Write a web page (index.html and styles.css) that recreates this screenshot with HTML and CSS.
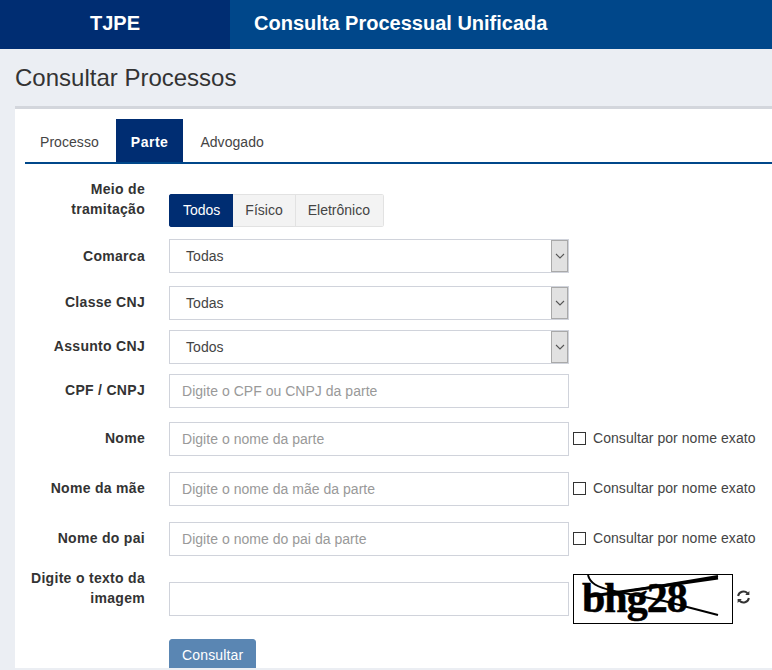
FILE: index.html
```html
<!DOCTYPE html>
<html lang="pt-BR">
<head>
    <meta charset="UTF-8">
    <meta name="viewport" content="width=device-width, initial-scale=1.0">
    <title>Consulta Processual Unificada</title>
    <link rel="stylesheet" href="styles.css">
</head>
<body>
    <header class="topbar">
        <div class="brand">TJPE</div>
        <div class="system">Consulta Processual Unificada</div>
    </header>

    <h1 class="page-title">Consultar Processos</h1>

    <main class="panel">
        <ul class="tabs">
            <li class="tab">Processo</li>
            <li class="tab active">Parte</li>
            <li class="tab">Advogado</li>
        </ul>

        <form class="search-form">
            <div class="row row-meio">
                <label class="row-label">Meio de tramitação</label>
                <div class="btn-group">
                    <span class="btn-seg on">Todos</span>
                    <span class="btn-seg">Físico</span>
                    <span class="btn-seg">Eletrônico</span>
                </div>
            </div>

            <div class="row row-comarca">
                <label class="row-label">Comarca</label>
                <div class="select-box">
                    <span class="select-value">Todas</span>
                    <span class="select-arrow"><svg width="10" height="6" viewBox="0 0 10 6"><path d="M1 1l4 4 4-4" fill="none" stroke="#555" stroke-width="1.1"/></svg></span>
                </div>
            </div>

            <div class="row row-classe">
                <label class="row-label">Classe CNJ</label>
                <div class="select-box">
                    <span class="select-value">Todas</span>
                    <span class="select-arrow"><svg width="10" height="6" viewBox="0 0 10 6"><path d="M1 1l4 4 4-4" fill="none" stroke="#555" stroke-width="1.1"/></svg></span>
                </div>
            </div>

            <div class="row row-assunto">
                <label class="row-label">Assunto CNJ</label>
                <div class="select-box">
                    <span class="select-value">Todos</span>
                    <span class="select-arrow"><svg width="10" height="6" viewBox="0 0 10 6"><path d="M1 1l4 4 4-4" fill="none" stroke="#555" stroke-width="1.1"/></svg></span>
                </div>
            </div>

            <div class="row row-cpf">
                <label class="row-label">CPF / CNPJ</label>
                <input class="text-input" type="text" placeholder="Digite o CPF ou CNPJ da parte">
            </div>

            <div class="row row-nome">
                <label class="row-label">Nome</label>
                <input class="text-input" type="text" placeholder="Digite o nome da parte">
                <label class="exact"><span class="check"></span>Consultar por nome exato</label>
            </div>

            <div class="row row-nome">
                <label class="row-label">Nome da mãe</label>
                <input class="text-input" type="text" placeholder="Digite o nome da mãe da parte">
                <label class="exact"><span class="check"></span>Consultar por nome exato</label>
            </div>

            <div class="row row-nome">
                <label class="row-label">Nome do pai</label>
                <input class="text-input" type="text" placeholder="Digite o nome do pai da parte">
                <label class="exact"><span class="check"></span>Consultar por nome exato</label>
            </div>

            <div class="row row-captcha">
                <label class="row-label">Digite o texto da imagem</label>
                <input class="text-input" type="text">
                <div class="captcha">
                    <span class="captcha-text">bhg28</span>
                    <svg class="captcha-lines" width="158" height="48" viewBox="0 0 158 48">
                        <path d="M36 19L144 1" stroke="#000" stroke-width="2" fill="none"/>
                        <path d="M11 22L144 3" stroke="#000" stroke-width="3" fill="none"/>
                        <path d="M14 0C16 8 22 12 40 16L90 26L144 40" stroke="#000" stroke-width="2" fill="none"/>
                    </svg>
                </div>
                <svg class="refresh" width="15" height="14" viewBox="0 0 14 14">
                    <path d="M1.6 6A5.5 5.5 0 0 1 11 3.2" fill="none" stroke="#333" stroke-width="2"/>
                    <path d="M12.9 .9v4.2H8.7z" fill="#333"/>
                    <path d="M12.4 8A5.5 5.5 0 0 1 3 10.8" fill="none" stroke="#333" stroke-width="2"/>
                    <path d="M1.1 13.1V8.9h4.2z" fill="#333"/>
                </svg>
            </div>

            <div class="row row-submit">
                <button class="submit-btn" type="button">Consultar</button>
            </div>
        </form>
    </main>
</body>
</html>
```

FILE: styles.css
```css
html {
    height: 100%;
}

body {
    margin: 0;
    height: 670px;
    overflow: hidden;
    background-color: #ebeef3;
    font-family: "Liberation Sans", Arial, sans-serif;
    font-size: 14px;
    letter-spacing: .06px;
    color: #333;
}

.topbar {
    display: flex;
    height: 49px;
    background-color: #00478a;
    color: #fff;
    font-weight: bold;
    font-size: 20px;
    line-height: 47px;
    letter-spacing: 0;
}

.brand {
    width: 230px;
    text-align: center;
    background-color: #002d72;
}

.system {
    padding-left: 24px;
}

.page-title {
    margin: 0;
    padding: 14px 0 0 15px;
    height: 43px;
    font-size: 24px;
    font-weight: normal;
    line-height: 30px;
    letter-spacing: 0;
    color: #333;
}

.panel {
    margin-left: 15px;
    height: 549px;
    overflow: hidden;
    border-top: 3px solid #d3d6dc;
    background-color: #fff;
    padding: 10px 0 0 10px;
}

.tabs {
    display: flex;
    margin: 0;
    padding: 0;
    list-style-type: none;
    border-bottom: 2px solid #00478a;
}

.tab {
    height: 43px;
    padding: 0 15px;
    margin-right: 2px;
    line-height: 46px;
    color: #444;
}

.tab.active {
    background-color: #002d72;
    color: #fff;
    font-weight: bold;
    letter-spacing: .5px;
}

.search-form {
    padding-top: 27px;
}

.row {
    display: flex;
    align-items: flex-start;
}

.row-label {
    flex: none;
    width: 120px;
    padding-top: 6px;
    margin-right: 24px;
    text-align: right;
    font-weight: bold;
    line-height: 20px;
    letter-spacing: .3px;
    color: #333;
}

.row-meio {
    margin-top: 3px;
    height: 45px;
}

.row-meio .row-label {
    margin-top: -15px;
    padding-top: 0;
}

.btn-group {
    display: flex;
    height: 33px;
    border-radius: 3px;
    overflow: hidden;
}

.btn-seg {
    padding: 0 12px;
    line-height: 30px;
    letter-spacing: 0;
    color: #444;
    background-color: #f3f3f3;
    border: 1px solid #e2e2e2;
    border-left: none;
}

.btn-seg:first-child {
    padding: 0 12px 0 13px;
    border: 1px solid #002d72;
}

.btn-seg:last-child {
    padding-right: 13px;
}

.btn-seg.on {
    background-color: #002d72;
    color: #fff;
}

.select-box {
    display: flex;
    justify-content: space-between;
    width: 400px;
    height: 34px;
    box-sizing: border-box;
    border: 1px solid #d0d3db;
    background-color: #fff;
}

.select-value {
    padding-left: 16px;
    line-height: 33px;
    color: #444;
}

.select-arrow {
    display: flex;
    align-items: center;
    justify-content: center;
    width: 17px;
    box-sizing: border-box;
    border: 1px solid #a9a9a9;
    background-color: #e1e1e1;
}

.row-comarca {
    height: 47px;
}

.row-comarca .row-label {
    padding-top: 7px;
}

.row-classe {
    height: 44px;
}

.row-assunto {
    height: 44px;
}

.row-cpf {
    height: 48px;
}

.row-nome {
    height: 50px;
}

.text-input {
    width: 400px;
    height: 34px;
    box-sizing: border-box;
    margin: 0;
    padding: 0 12px;
    border: 1px solid #d0d3db;
    background-color: #fff;
    font-family: "Liberation Sans", Arial, sans-serif;
    font-size: 14px;
    letter-spacing: .03px;
    color: #444;
}

.text-input::placeholder {
    color: #999;
}

.exact {
    display: flex;
    align-items: center;
    height: 32px;
    margin-left: 4px;
    color: #444;
    white-space: nowrap;
}

.check {
    width: 11px;
    height: 11px;
    margin-right: 7px;
    border: 1px solid #333;
}

.row-captcha {
    height: 67px;
}

.row-captcha .row-label {
    margin-top: -4px;
    padding-top: 0;
}

.row-captcha .text-input {
    margin-top: 10px;
}

.captcha {
    position: relative;
    flex: none;
    width: 158px;
    height: 48px;
    margin: 2px 0 0 4px;
    border: 1px solid #000;
    background-color: #fff;
    overflow: hidden;
}

.captcha-text {
    display: block;
    padding-left: 8px;
    font-family: "Liberation Serif", "Times New Roman", serif;
    font-size: 42px;
    font-weight: bold;
    line-height: 46px;
    letter-spacing: -1px;
    -webkit-text-stroke: .5px #000;
    color: #000;
}

.captcha-lines {
    position: absolute;
    left: 0;
    top: 0;
}

.refresh {
    margin: 18px 0 0 3px;
}

.row-submit {
    padding-left: 144px;
}

.submit-btn {
    height: 34px;
    padding: 0 12px 2px;
    border: 1px solid #5a86b3;
    border-radius: 3px 3px 0 0;
    background-color: #5a86b3;
    color: #fff;
    font-family: "Liberation Sans", Arial, sans-serif;
    font-size: 14px;
    letter-spacing: .15px;
}
```
